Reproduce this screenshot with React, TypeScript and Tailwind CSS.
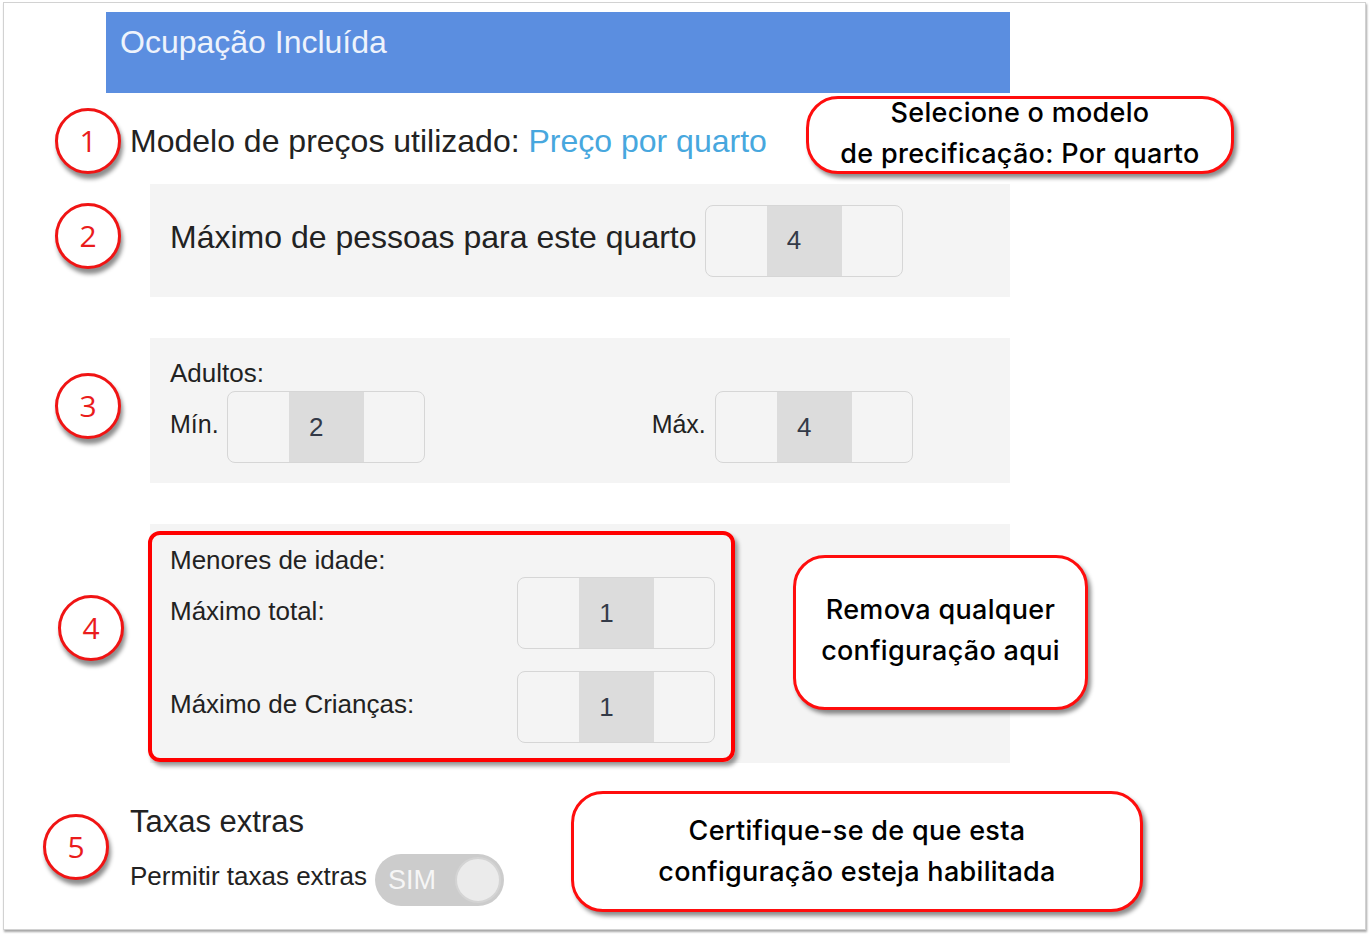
import type { ReactNode } from "react";

function Marker({ n, className }: { n: number; className: string }) {
  return (
    <div
      className={`flex h-[66px] w-[66px] shrink-0 items-center justify-center rounded-full border-[3px] border-[#f01414] bg-white font-['Open_Sans',sans-serif] text-[30px] leading-none text-[#ea1c1c] shadow-[2px_5px_4px_rgba(0,0,0,0.45)] ${className}`}
    >
      {n}
    </div>
  );
}

function Stepper({ value }: { value: number }) {
  return (
    <div className="flex h-[72px] w-[198px] shrink-0 overflow-hidden rounded-[8px] border-[1.5px] border-[#d6d6d6] bg-[#f4f4f4]">
      <div className="w-[61px]" />
      <div className="flex w-[75px] items-center justify-center bg-[#dcdcdc] pr-[20px] text-[26px] text-[#333a48]">
        {value}
      </div>
      <div className="flex-1" />
    </div>
  );
}

function Callout({ className, lines }: { className: string; lines: string[] }) {
  return (
    <div
      className={`absolute flex flex-col items-center justify-center rounded-[32px] border-[3px] border-[#ff0d0d] bg-white font-['Inter',sans-serif] text-[27px] font-medium leading-[41px] tracking-[0.3px] text-black shadow-[3px_4px_4px_rgba(0,0,0,0.45)] ${className}`}
    >
      {lines.map((l) => (
        <div key={l}>{l}</div>
      ))}
    </div>
  );
}

function Row({ children, className = "" }: { children: ReactNode; className?: string }) {
  return <div className={`flex items-start ${className}`}>{children}</div>;
}

export default function App() {
  return (
    <div className="relative h-[936px] w-[1370px] overflow-hidden bg-white pl-[3px] pt-[2px] font-['Liberation_Sans',Arial,sans-serif] text-[#222222]">
      <div className="h-[928px] w-[1363px] border border-[#d2d2d2] bg-white shadow-[1px_2px_2px_rgba(0,0,0,0.35)]">
        {/* header */}
        <div className="ml-[102px] mt-[9px] h-[81px] w-[904px] bg-[#5b8ee0] pl-[14px] pt-[14px] text-[32px] leading-none text-[#eef3fc]">
          Ocupação Incluída
        </div>

        {/* 1 */}
        <div className="flex h-[91px] items-center pt-[5px]">
          <Marker n={1} className="ml-[51px]" />
          <div className="ml-[9px] text-[32px] leading-none">
            Modelo de preços utilizado: <span className="text-[#47a7de]">Preço por quarto</span>
          </div>
        </div>

        {/* 2 */}
        <Row>
          <div className="w-[146px] shrink-0">
            <Marker n={2} className="ml-[51px] mt-[19px]" />
          </div>
          <div className="flex h-[113px] w-[860px] items-center bg-[#f4f4f4] pl-[20px]">
            <div className="mb-[8px] text-[32px] leading-none">Máximo de pessoas para este quarto</div>
            <div className="ml-[8px]">
              <Stepper value={4} />
            </div>
          </div>
        </Row>

        {/* 3 */}
        <Row className="mt-[41px]">
          <div className="w-[146px] shrink-0">
            <Marker n={3} className="ml-[51px] mt-[35px]" />
          </div>
          <div className="h-[145px] w-[860px] bg-[#f4f4f4] pl-[20px] pt-[22px]">
            <div className="text-[26px] leading-[26px]">Adultos:</div>
            <div className="mt-[5px] flex items-center">
              <div className="mb-[6px] text-[25px] leading-[25px]">Mín.</div>
              <div className="ml-[8px]">
                <Stepper value={2} />
              </div>
              <div className="mb-[6px] ml-[227px] text-[25px] leading-[25px]">Máx.</div>
              <div className="ml-[9px]">
                <Stepper value={4} />
              </div>
            </div>
          </div>
        </Row>

        {/* 4 */}
        <Row className="mt-[41px]">
          <div className="w-[146px] shrink-0">
            <Marker n={4} className="ml-[54px] mt-[71px]" />
          </div>
          <div className="h-[239px] w-[860px] bg-[#f4f4f4] pt-[7px]">
            <div className="-ml-[2px] w-[587px] rounded-[12px] border-[4px] border-[#ff0000] pb-[15px] pl-[18px] pr-[16px] pt-[12px] shadow-[3px_4px_4px_rgba(0,0,0,0.4)]">
              <div className="text-[26px] leading-[26px]">Menores de idade:</div>
              <div className="mt-[4px] flex items-center justify-between">
                <div className="mb-[4px] text-[26px] leading-[26px]">Máximo total:</div>
                <Stepper value={1} />
              </div>
              <div className="mt-[22px] flex items-center justify-between">
                <div className="mb-[6px] text-[26px] leading-[26px]">Máximo de Crianças:</div>
                <Stepper value={1} />
              </div>
            </div>
          </div>
        </Row>

        {/* 5 */}
        <Row>
          <Marker n={5} className="ml-[39px] mt-[51px]" />
          <div className="ml-[21px] mt-[43px]">
            <div className="text-[31px] leading-[31px]">Taxas extras</div>
            <div className="mt-[17px] flex items-center">
              <div className="mb-[8px] text-[26px] leading-[26px]">Permitir taxas extras</div>
              <div className="ml-[8px] flex h-[52px] w-[129px] items-center justify-between rounded-full bg-[#cccccc] pl-[13px] pr-[3px]">
                <span className="text-[27px] leading-none text-[#f6f6f6]">SIM</span>
                <div className="h-[46px] w-[46px] rounded-full border-[2px] border-[#d4d4d4] bg-[#ebebeb]" />
              </div>
            </div>
          </div>
        </Row>
      </div>

      <Callout
        className="left-[806px] top-[96px] h-[78px] w-[428px] pb-[4px]"
        lines={["Selecione o modelo", "de precificação: Por quarto"]}
      />
      <Callout
        className="left-[793px] top-[555px] h-[155px] w-[295px] pb-[5px]"
        lines={["Remova qualquer", "configuração aqui"]}
      />
      <Callout
        className="left-[571px] top-[791px] h-[121px] w-[572px] pb-[2px]"
        lines={["Certifique-se de que esta", "configuração esteja habilitada"]}
      />
    </div>
  );
}
